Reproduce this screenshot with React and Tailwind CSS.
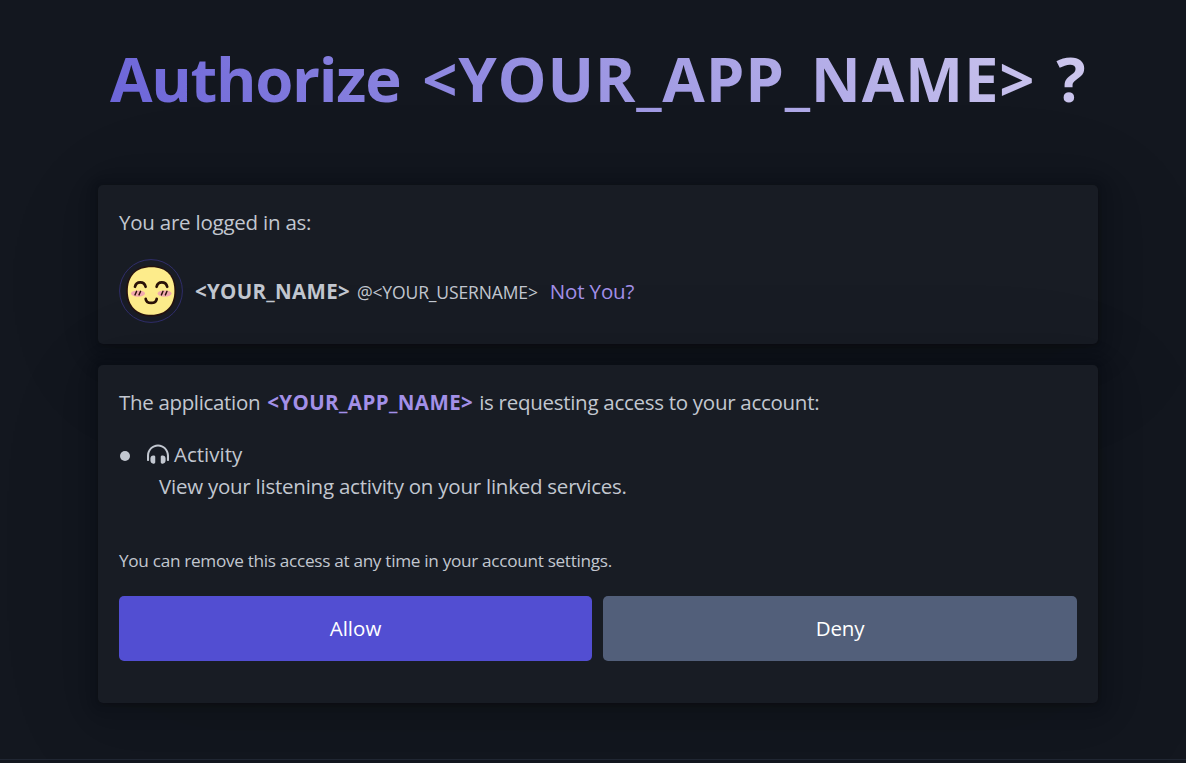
import { FaHeadphonesAlt } from "react-icons/fa";

function Avatar() {
  return (
    <svg viewBox="0 0 64 64" className="block size-16 shrink-0" aria-label="Avatar">
      <circle cx="32" cy="32" r="31.4" fill="#191c25" stroke="#302e6b" strokeWidth="1" />
      <rect x="7.2" y="6.8" width="49.8" height="50.6" rx="23" fill="#25120f" />
      <path d="M32.5 8.2C48 8.2 55.4 17.5 55.4 32S47 55.8 32.3 55.8 8.8 47 8.8 32 17 8.2 32.5 8.2Z" fill="#fdec8b" />
      <ellipse cx="19" cy="34.6" rx="7" ry="3.2" fill="#f2a9b0" />
      <ellipse cx="45.6" cy="34.6" rx="7" ry="3.2" fill="#f2a9b0" />
      <g fill="none" stroke="#2a1208" strokeLinecap="round">
        <path d="M16 27.8c1.2-5.9 9.200-5.900 10.600 0M37.600 27.800c1.200-5.900 9.200-5.900 10.600 0M26.700 39.800c.6 5.500 10.400 5.500 11 0" strokeWidth="2.700" />
        <path d="M17.600 32.300l-1.600 3.600M21.600 32.300l-1.600 3.600M44 32.300l-1.600 3.600M48 32.300l-1.600 3.600" strokeWidth="1.400" />
      </g>
    </svg>
  );
}

function Card({ className, children }) {
  return (
    <section
      className={
        "rounded-[5px] bg-[#181c24] px-[21px] shadow-[0.3px_0.6px_3.6px_rgba(0,0,0,0.12),0.7px_1.4px_8.4px_rgba(0,0,0,0.12),1.3px_2.6px_15.7px_rgba(0,0,0,0.1),2.3px_4.7px_28px_rgba(0,0,0,0.08),4.3px_8.7px_52px_rgba(0,0,0,0.07),10px_21px_126px_rgba(0,0,0,0.08)] " +
        className
      }
    >
      {children}
    </section>
  );
}

export default function App() {
  return (
    <main className="flex h-[763px] w-full flex-col overflow-hidden bg-[#13171f] pl-[98px] font-['Open_Sans','Noto_Sans',sans-serif] text-[20.5px] leading-8 text-[#c2c7d0]">
      <h1 className="mt-[36px] flex h-[84px] w-[1000px] items-center whitespace-nowrap bg-linear-[60deg] from-[#6a63d8] to-[#d0caee] bg-clip-text pl-[12px] text-[61.7px] leading-[84px] font-bold text-transparent">
        <span className="tracking-[-1.3px]">Authorize</span>
        <span className="ml-[22px] tracking-[0.75px]">&lt;YOUR_APP_NAME&gt;</span>
        <span className="ml-[21px]">?</span>
      </h1>

      <Card className="mt-[65px] h-[159px] w-[1000px] pt-[21px]">
        <p className="tracking-[-0.23px]">You are logged in as:</p>
        <div className="mt-[21px] flex items-center whitespace-nowrap">
          <Avatar />
          <strong className="ml-[12px] font-bold tracking-[0.3px]">&lt;YOUR_NAME&gt;</strong>
          <span className="mt-px ml-[7px] text-[17.5px] tracking-[-0.13px]">@&lt;YOUR_USERNAME&gt;</span>
          <a className="ml-[12px] tracking-[-0.15px] text-[#a390e8]">Not You?</a>
        </div>
      </Card>

      <Card className="mt-[21px] h-[338px] w-[1000px] pt-[21px]">
        <p className="flex whitespace-nowrap">
          <span className="tracking-[-0.33px]">The application</span>
          <strong className="ml-[7px] tracking-[0.4px] text-[#a390e8]">&lt;YOUR_APP_NAME&gt;</strong>
          <span className="ml-[6px] tracking-[-0.28px]">is requesting access to your account:</span>
        </p>
        <ul className="mt-[20px]">
          <li className="flex">
            <span className="mt-[13px] ml-[1px] size-[10px] shrink-0 rounded-full bg-[#c2c7d0]" />
            <div className="ml-[17px] whitespace-nowrap">
              <div className="flex items-center">
                <FaHeadphonesAlt size={22} />
                <span className="ml-[5px]">Activity</span>
              </div>
              <div className="pl-[12px] tracking-[-0.24px]">View your listening activity on your linked services.</div>
            </div>
          </li>
        </ul>
        <p className="mt-[43px] text-[17.2px] tracking-[-0.31px] whitespace-nowrap">You can remove this access at any time in your account settings.</p>
        <div className="mt-[19px] grid grid-cols-[473px_474px] gap-[11px] text-white">
          <button className="h-[65px] rounded-[5px] bg-[#524ed2] pb-[2px]">Allow</button>
          <button className="h-[65px] rounded-[5px] bg-[#525f7a] pb-[2px] tracking-[-0.2px]">Deny</button>
        </div>
      </Card>
      <footer className="mt-auto -ml-[98px] h-[4px] border-t border-[#202632]" />
    </main>
  );
}
